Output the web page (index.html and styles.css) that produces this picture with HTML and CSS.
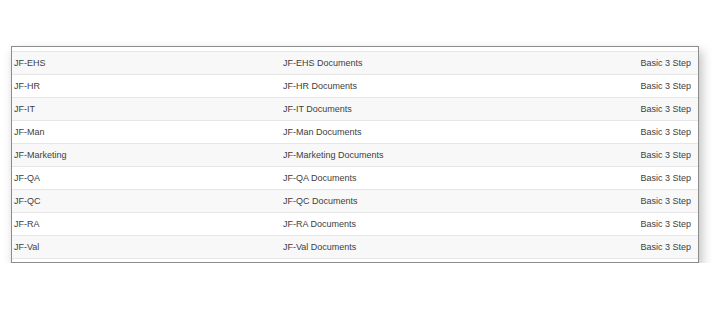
FILE: index.html
```html
<!DOCTYPE html>
<html>
<head>
<meta charset="utf-8">
<link rel="stylesheet" href="styles.css">
</head>
<body>
<div class="page">
  <div class="panel">
    <table class="grid">
      <tbody>
        <tr><td class="c-name">JF-EHS</td><td class="c-desc">JF-EHS Documents</td><td class="c-flow">Basic 3 Step</td></tr>
        <tr><td class="c-name">JF-HR</td><td class="c-desc">JF-HR Documents</td><td class="c-flow">Basic 3 Step</td></tr>
        <tr><td class="c-name">JF-IT</td><td class="c-desc">JF-IT Documents</td><td class="c-flow">Basic 3 Step</td></tr>
        <tr><td class="c-name">JF-Man</td><td class="c-desc">JF-Man Documents</td><td class="c-flow">Basic 3 Step</td></tr>
        <tr><td class="c-name">JF-Marketing</td><td class="c-desc">JF-Marketing Documents</td><td class="c-flow">Basic 3 Step</td></tr>
        <tr><td class="c-name">JF-QA</td><td class="c-desc">JF-QA Documents</td><td class="c-flow">Basic 3 Step</td></tr>
        <tr><td class="c-name">JF-QC</td><td class="c-desc">JF-QC Documents</td><td class="c-flow">Basic 3 Step</td></tr>
        <tr><td class="c-name">JF-RA</td><td class="c-desc">JF-RA Documents</td><td class="c-flow">Basic 3 Step</td></tr>
        <tr><td class="c-name">JF-Val</td><td class="c-desc">JF-Val Documents</td><td class="c-flow">Basic 3 Step</td></tr>
      </tbody>
    </table>
  </div>
</div>
</body>
</html>
```
FILE: styles.css
```css
html, body {
  margin: 0;
  padding: 0;
  background: #ffffff;
}
.page {
  padding: 46px 16px 0 11px;
  font-family: "Liberation Sans", Arial, sans-serif;
  font-size: 9px;
  color: #404040;
}
.panel {
  border: 1px solid #8c8c8c;
  padding: 4px 0 3px 0;
  background: #ffffff;
  box-shadow: 3px 5px 10px rgba(0, 0, 0, 0.25);
}
.grid {
  width: 100%;
  border-collapse: collapse;
  border-bottom: 1px solid #e6e6e6;
}
.grid tr {
  height: 23px;
}
.grid td {
  border-top: 1px solid #e6e6e6;
  padding: 0 7px 0 2px;
  height: 22px;
  line-height: 22px;
  vertical-align: middle;
  white-space: nowrap;
}
.grid tr:nth-child(odd) td {
  background: #f8f8f8;
}
.c-name {
  width: 260px;
}
.c-flow {
  text-align: right;
}
```
